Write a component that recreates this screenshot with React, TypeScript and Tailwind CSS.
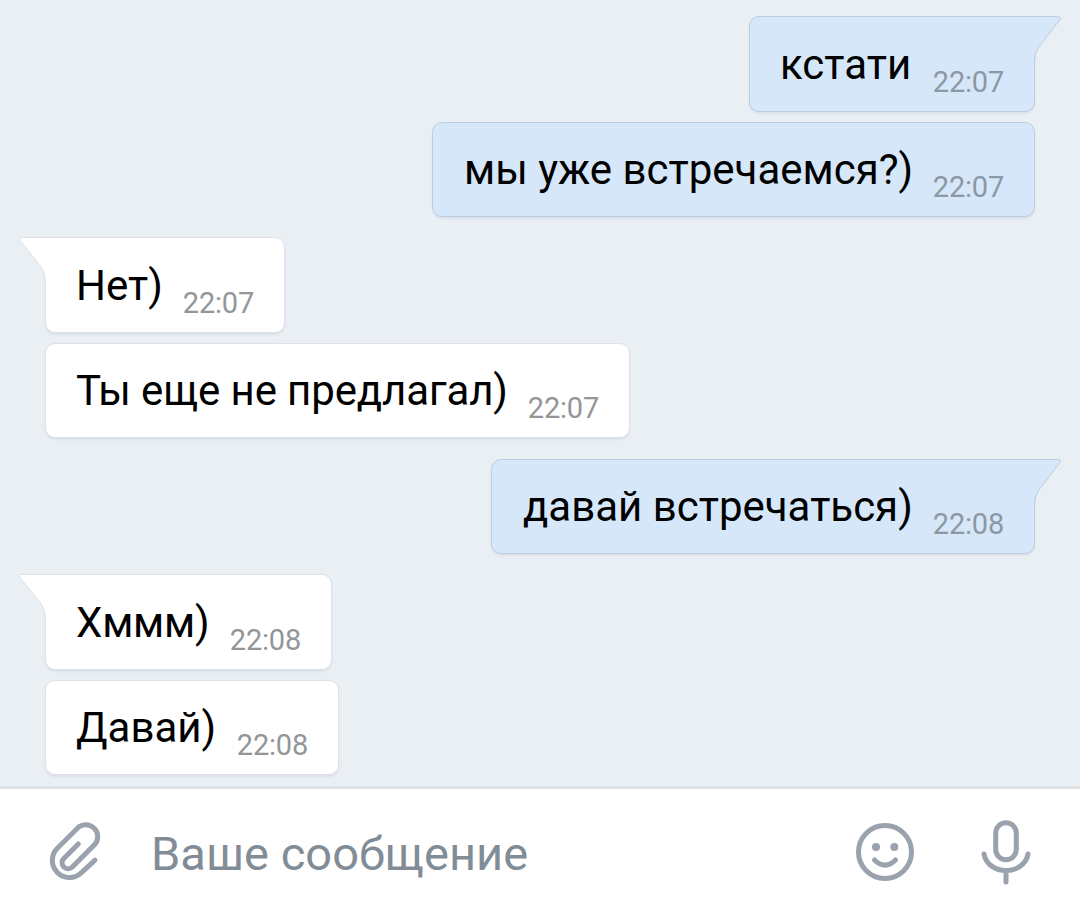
import React from "react";
import clsx from "clsx";

interface IMessage {
  text: string;
  time: string;
  own?: boolean;
  tail?: boolean;
  className: string;
  textClassName?: string;
}

const messages: IMessage[] = [
  { text: "кстати", time: "22:07", own: true, tail: true, className: "h-24 w-[286px]", textClassName: "-ml-px" },
  { text: "мы уже встречаемся?)", time: "22:07", own: true, className: "mt-[10px] h-[95px] w-[603px]" },
  { text: "Нет)", time: "22:07", tail: true, className: "mt-5 h-24 w-[240px]" },
  {
    text: "Ты еще не предлагал)",
    time: "22:07",
    className: "mt-[10px] h-[95px] w-[585px]",
    textClassName: "tracking-[-0.12px]",
  },
  { text: "давай встречаться)", time: "22:08", own: true, tail: true, className: "mt-[21px] h-[95px] w-[544px]" },
  { text: "Хммм)", time: "22:08", tail: true, className: "mt-5 h-24 w-[287px]", textClassName: "tracking-[-0.2px]" },
  { text: "Давай)", time: "22:08", className: "mt-[10px] h-[95px] w-[294px]" },
];

const OwnTail = () => (
  <svg className="absolute -top-px -right-[28px]" width="32" height="52" viewBox="0 0 32 52" fill="none">
    <path d="M0 1H29Q31 1.5 30 3.5L8.5 31.5Q4.5 37 4.5 45V52H0Z" fill="#d6e7f9" />
    <path d="M0 .5H28.5Q31.5 1 30 3.5L8.5 31.5Q4.5 37 4.5 45V52" stroke="#bccde2" />
  </svg>
);

const IncomingTail = () => (
  <svg className="absolute -top-px -left-[28px]" width="33" height="52" viewBox="0 0 33 52" fill="none">
    <path d="M33 1H3Q.8 1.5 2 3.5L22.5 29Q27.5 36 27.5 45V52H33Z" fill="#fff" />
    <path d="M33 .5H3Q.5 1 2 3.5L22.5 29Q27.5 36 27.5 45V52" stroke="#dde1e7" />
  </svg>
);

const Message = ({ text, time, own, tail, className, textClassName }: IMessage) => (
  <div
    className={clsx(
      "relative flex shrink-0 items-end justify-between rounded-[10px] border pr-[30px] shadow-[0_2px_2px_rgba(120,135,160,0.12)]",
      own ? "self-end border-[#bccde2] bg-[#d6e7f9] pl-[31px]" : "self-start border-[#dde1e7] bg-white pl-[30px]",
      tail && (own ? "rounded-tr-none" : "rounded-tl-none"),
      className
    )}
  >
    {tail && (own ? <OwnTail /> : <IncomingTail />)}
    <span className={clsx("mb-[22px] whitespace-nowrap text-[42px] leading-[48px] text-black", textClassName)}>
      {text}
    </span>
    <span
      className={clsx(
        "mb-[12px] whitespace-nowrap text-[29px] leading-[34px] tracking-[-0.2px]",
        own ? "text-[#8d98a5]" : "text-[#939699]"
      )}
    >
      {time}
    </span>
  </div>
);

const AttachIcon = () => (
  <svg width="54" height="62" viewBox="0 -0.6 54 62" fill="none" stroke="#99a2ad" strokeWidth="5" strokeLinecap="round">
    <path d="M30.3 22.3L15.8 36.8A6 6 0 0 0 24.3 45.3L46.7 22.9A11.9 11.9 0 0 0 29.9 6.1L8.5 27.5A17.2 17.2 0 0 0 32.7 51.8L47 38.5" />
  </svg>
);

const SmileIcon = () => (
  <svg width="60" height="60" viewBox="0 0 60 60" fill="none" stroke="#99a2ad" strokeWidth="5" strokeLinecap="round">
    <circle cx="30" cy="30" r="26.5" />
    <path d="M19.5 38Q30 48.5 40.5 38" />
    <circle cx="21" cy="25" r="4" fill="#99a2ad" stroke="none" />
    <circle cx="39.3" cy="25" r="4" fill="#99a2ad" stroke="none" />
  </svg>
);

const MicIcon = () => (
  <svg width="50" height="66" viewBox="0 0 50 66" fill="none" stroke="#99a2ad" strokeWidth="5" strokeLinecap="round">
    <rect x="14.7" y="2.7" width="20.6" height="37" rx="10.3" />
    <path d="M3 34C7 56 43 56 47 34M25 52V62" />
  </svg>
);

const App = () => {
  return (
    <div className="flex h-[915px] w-[1080px] flex-col overflow-hidden bg-[#eaeff4] font-['Roboto','Liberation_Sans',sans-serif]">
      <div className="flex h-[786px] shrink-0 flex-col pl-[45px] pr-[45px] pt-4">
        {messages.map((message) => (
          <Message key={message.text} {...message} />
        ))}
      </div>
      <div className="flex flex-1 items-start border-t-[3px] border-[#dfe3e8] bg-white">
        <div className="ml-[48px] mt-[32px]">
          <AttachIcon />
        </div>
        <span className="ml-[49px] mt-[41px] flex-1 whitespace-nowrap text-[47px] leading-[48px] tracking-[0.05px] text-[#818c96]">
          Ваше сообщение
        </span>
        <div className="mt-[33px]">
          <SmileIcon />
        </div>
        <div className="ml-[66px] mr-[49px] mt-[31px]">
          <MicIcon />
        </div>
      </div>
    </div>
  );
};

export default App;
